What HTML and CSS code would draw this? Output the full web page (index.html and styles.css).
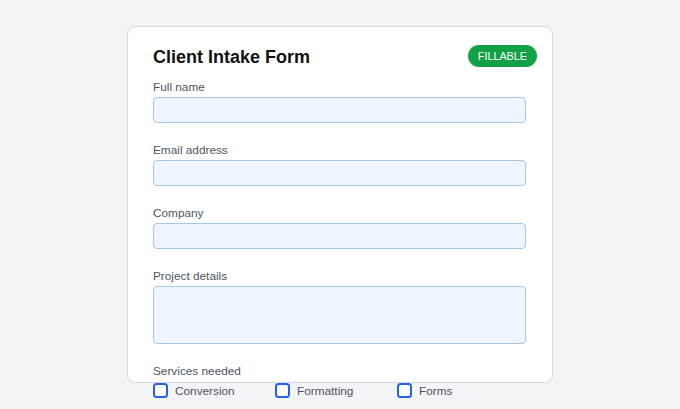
FILE: index.html
```html
<!DOCTYPE html>
<html>
<head>
<meta charset="utf-8">
<link rel="stylesheet" href="styles.css">
</head>
<body>
<div class="card">
  <span class="badge">FILLABLE</span>
  <h1 class="title">Client Intake Form</h1>
  <div class="field">
    <label class="label">Full name</label>
    <div class="input"></div>
  </div>
  <div class="field">
    <label class="label">Email address</label>
    <div class="input"></div>
  </div>
  <div class="field">
    <label class="label">Company</label>
    <div class="input"></div>
  </div>
  <div class="field">
    <label class="label">Project details</label>
    <div class="input textarea"></div>
  </div>
  <div class="field">
    <label class="label">Services needed</label>
    <div class="checks">
      <div class="check"><span class="box"></span><span class="check-text">Conversion</span></div>
      <div class="check"><span class="box"></span><span class="check-text">Formatting</span></div>
      <div class="check"><span class="box"></span><span class="check-text">Forms</span></div>
    </div>
  </div>
</div>
</body>
</html>
```
FILE: styles.css
```css
* { box-sizing: border-box; }
html, body { margin: 0; padding: 0; }
body {
  background: #f3f4f8;
  font-family: "Liberation Sans", Arial, sans-serif;
  width: 680px;
  height: 409px;
  overflow: hidden;
}
.card {
  position: relative;
  width: 426px;
  height: 357px;
  margin: 26px 0 0 127px;
  background: #ffffff;
  border: 1px solid #d4d8df;
  border-radius: 8px;
  padding: 19px 26px 0 25px;
  display: flex;
  flex-direction: column;
  gap: 20px;
}
.badge {
  position: absolute;
  top: 18px;
  right: 15px;
  height: 22px;
  padding: 0 10px;
  border-radius: 11px;
  background: #13a146;
  color: #ffffff;
  font-size: 10.8px;
  line-height: 22px;
}
.title {
  margin: 0 0 -8px;
  font-size: 18px;
  line-height: 22px;
  font-weight: 700;
  color: #111111;
}
.field {
  display: flex;
  flex-direction: column;
  gap: 3px;
}
.label {
  font-size: 11.8px;
  line-height: 14px;
  color: #4b5563;
}
.input {
  height: 26px;
  background: #eef5ff;
  border: 1px solid #a3c8ea;
  border-radius: 4px;
}
.textarea { height: 58px; }
.checks {
  display: flex;
  height: 19px;
  align-items: center;
}
.check {
  width: 122px;
  display: flex;
  align-items: center;
  gap: 7px;
}
.box {
  width: 15px;
  height: 15px;
  border: 2px solid #2563eb;
  border-radius: 3.5px;
  background: #ffffff;
}
.check-text {
  font-size: 11.8px;
  line-height: 14px;
  color: #4b5563;
}
```
